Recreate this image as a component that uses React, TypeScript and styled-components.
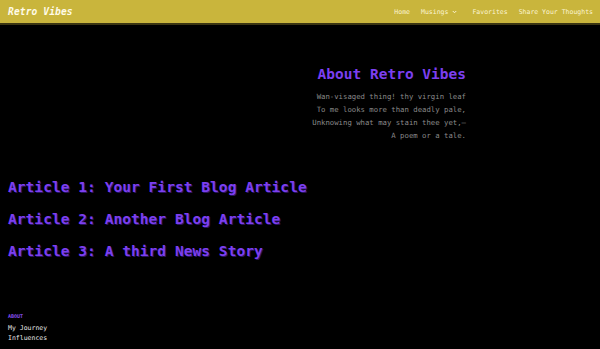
import React from 'react';
import styled, { createGlobalStyle } from 'styled-components';

const GlobalStyle = createGlobalStyle`
  html, body {
    margin: 0;
    padding: 0;
    background: #000;
  }
  body {
    font-family: "DejaVu Sans Mono", "Liberation Mono", monospace;
  }
`;

const Page = styled.div`
  min-height: 349px;
  background: #000;
  display: flex;
  flex-direction: column;
`;

const Header = styled.header`
  height: 23px;
  background: #c9b53c;
  border-bottom: 2px solid #3b3512;
  display: flex;
  align-items: center;
  justify-content: space-between;
  padding: 0 7px 0 8px;
`;

const Logo = styled.div`
  color: #fffbe8;
  font-size: 9.6px;
  font-weight: bold;
  font-style: italic;
  letter-spacing: 0.1px;
`;

const Nav = styled.nav`
  display: flex;
  align-items: center;
  gap: 11px;
`;

const NavLink = styled.a<{ $wide?: boolean }>`
  color: #fbf4d2;
  font-size: 6.5px;
  text-decoration: none;
  display: flex;
  align-items: center;
  gap: 4px;
  margin-right: ${(p) => (p.$wide ? '4px' : '0')};
`;

const Main = styled.main`
  flex: 1;
  display: flex;
  flex-direction: column;
`;

const AboutSection = styled.section`
  display: flex;
  flex-direction: column;
  align-items: flex-end;
  padding: 40px 134px 0 0;
`;

const AboutTitle = styled.h2`
  margin: 0;
  color: #7c3ff0;
  font-size: 14.5px;
  line-height: 18px;
  font-weight: bold;
`;

const Poem = styled.p`
  margin: 7px 0 0;
  color: #8a8a8a;
  font-size: 7.3px;
  line-height: 13px;
  text-align: right;
`;

const Articles = styled.div`
  display: flex;
  flex-direction: column;
  padding: 29px 8px 0;
`;

const ArticleTitle = styled.h3`
  margin: 0;
  color: #7c3ff0;
  font-size: 14.6px;
  line-height: 32px;
  font-weight: bold;
  text-shadow: 1px 1px 0 #2a1460;
`;

const Footer = styled.footer`
  padding: 42px 8px 6px;
  display: flex;
  flex-direction: column;
`;

const FooterHead = styled.div`
  color: #8a4ff5;
  font-size: 5px;
  font-weight: bold;
  line-height: 8px;
  margin-bottom: 3px;
`;

const FooterLink = styled.a`
  color: #e8e8e8;
  font-size: 6.5px;
  line-height: 10px;
  text-decoration: none;
`;

const Chevron = () => (
  <svg width="5" height="4" viewBox="0 0 10 8">
    <path d="M1.5 2 L5 5.5 L8.5 2" fill="none" stroke="#fbf4d2" strokeWidth="2" />
  </svg>
);

export default function App() {
  const articles = [
    'Article 1: Your First Blog Article',
    'Article 2: Another Blog Article',
    'Article 3: A third News Story',
  ];

  return (
    <Page>
      <GlobalStyle />
      <Header>
        <Logo>Retro Vibes</Logo>
        <Nav>
          <NavLink href="#">Home</NavLink>
          <NavLink href="#" $wide>
            Musings <Chevron />
          </NavLink>
          <NavLink href="#">Favorites</NavLink>
          <NavLink href="#">Share Your Thoughts</NavLink>
        </Nav>
      </Header>
      <Main>
        <AboutSection>
          <AboutTitle>About Retro Vibes</AboutTitle>
          <Poem>
            Wan-visaged thing! thy virgin leaf
            <br />
            To me looks more than deadly pale,
            <br />
            Unknowing what may stain thee yet,—
            <br />
            A poem or a tale.
          </Poem>
        </AboutSection>
        <Articles>
          {articles.map((a) => (
            <ArticleTitle key={a}>{a}</ArticleTitle>
          ))}
        </Articles>
      </Main>
      <Footer>
        <FooterHead>ABOUT</FooterHead>
        <FooterLink href="#">My Journey</FooterLink>
        <FooterLink href="#">Influences</FooterLink>
      </Footer>
    </Page>
  );
}
